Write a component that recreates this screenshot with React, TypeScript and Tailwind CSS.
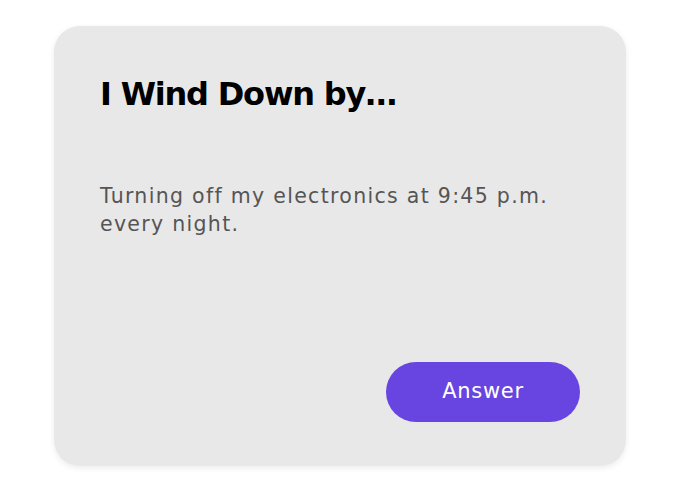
import React from 'react';

export default function App() {
  return (
    <div className="w-[680px] h-[492px] bg-white flex items-center justify-center" style={{ fontFamily: '"DejaVu Sans", "Noto Sans", sans-serif' }}>
      <div className="w-[572px] h-[440px] bg-[#e9e8e9] rounded-[26px] shadow-[0_2px_6px_rgba(0,0,0,0.08)] flex flex-col px-[46px] pt-[46px] pb-[44px]">
        <h1 className="text-[32px] leading-[44px] font-bold text-black tracking-[-1.2px]">I Wind Down by…</h1>
        <p className="mt-[66px] text-[20.5px] leading-[28px] text-[#555555] tracking-[1.3px]">
          Turning off my electronics at 9:45 p.m.
          <br />
          every night.
        </p>
        <div className="mt-auto flex justify-end">
          <button className="w-[194px] h-[60px] rounded-full bg-[#6845e0] text-white text-[21px] tracking-[0.7px]">
            Answer
          </button>
        </div>
      </div>
    </div>
  );
}
